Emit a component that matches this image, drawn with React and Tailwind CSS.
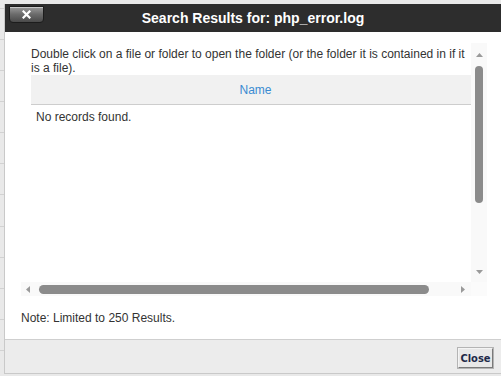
import React from 'react';

const Arrow = ({ dir }) => {
    // little grey triangles used on the scrollbars
    const pts = {
        up: '0,4 3.5,0 7,4',
        down: '0,0 7,0 3.5,4',
        left: '4,0 4,7 0,3.5',
        right: '0,0 0,7 4,3.5',
    }[dir];
    const vert = dir === 'up' || dir === 'down';
    return (
        <svg width={vert ? 7 : 4} height={vert ? 4 : 7} className="block">
            <polygon points={pts} fill="#9a9a9a" />
        </svg>
    );
};

const SearchResults = () => {
    const bgLines = [8, 39, 70, 101, 132, 163, 194, 226, 257, 288, 319, 350];

    return (
        <div className="relative w-[501px] h-[376px] overflow-hidden bg-[#e9e9e9] font-['Liberation_Sans',Arial,sans-serif]">
            {/* page behind the dialog */}
            {bgLines.map((y) => (
                <div key={y} className="absolute left-0 w-[4px] h-px bg-[#d2d2d2]" style={{ top: y }} />
            ))}

            {/* dialog */}
            <div className="absolute left-[4px] top-[4px] w-[497px] h-[370px] flex flex-col bg-white border-l border-b border-[#c9c9c9]">
                {/* title bar */}
                <div className="relative h-[28px] shrink-0 bg-[#2d2d2d] flex items-center justify-center">
                    <button className="absolute left-[4px] top-[2px] w-[35px] h-[17px] rounded-b-[4px] border border-[#1c1c1c] bg-gradient-to-b from-[#9a9a9a] via-[#6a6a6a] to-[#4a4a4a] flex items-center justify-center shadow-[inset_0_1px_0_#c8c8c8]">
                        <svg width="9" height="9" viewBox="0 0 9 9">
                            <path d="M1.5 1.5 L7.5 7.5 M7.5 1.5 L1.5 7.5" stroke="#fff" strokeWidth="2.2" strokeLinecap="square" />
                        </svg>
                    </button>
                    <h1 className="text-white font-bold text-[14px] leading-none">Search Results for: php_error.log</h1>
                </div>

                {/* body */}
                <div className="flex-1 flex flex-col pl-[16px] pt-[11px]">
                    <div className="w-[466px] h-[253px] flex flex-col">
                        <div className="flex h-[239px]">
                            <div className="w-[450px] overflow-hidden pl-[10px] pt-[4px]">
                                <p className="text-[12px] leading-[14px] text-[#333] w-[436px]">
                                    Double click on a file or folder to open the folder (or the folder it is contained in if it is a file).
                                </p>
                                <div className="h-[30px] bg-[#f1f1f1] border-b border-[#cdcdcd] flex items-center justify-center pl-[9px]">
                                    <span className="text-[12px] text-[#3a8bd1]">Name</span>
                                </div>
                                <p className="text-[12px] leading-[14px] text-[#333] pl-[5px] pt-[5px]">No records found.</p>
                            </div>
                            {/* vertical scrollbar */}
                            <div className="w-[16px] bg-[#f9f9f9] flex flex-col items-center">
                                <div className="pt-[10px] pb-[9px]"><Arrow dir="up" /></div>
                                <div className="w-[8px] h-[137px] rounded-full bg-[#8b8b8b]" />
                                <div className="flex-1" />
                                <div className="pb-[8px]"><Arrow dir="down" /></div>
                            </div>
                        </div>
                        {/* horizontal scrollbar */}
                        <div className="flex h-[14px]">
                            <div className="w-[450px] bg-[#f9f9f9] flex items-center">
                                <div className="pl-[5px] pr-[9px]"><Arrow dir="left" /></div>
                                <div className="w-[390px] h-[9px] rounded-full bg-[#8b8b8b]" />
                                <div className="flex-1" />
                                <div className="pr-[6px]"><Arrow dir="right" /></div>
                            </div>
                            <div className="w-[16px] bg-[#fbfbfb]" />
                        </div>
                    </div>
                    <p className="text-[12px] leading-[14px] text-[#333] mt-[15px]">Note: Limited to 250 Results.</p>
                </div>

                {/* footer */}
                <div className="h-[34px] shrink-0 bg-[#ececec] border-t border-[#cfcfcf] flex items-start justify-end pr-[8px] pt-[8px]">
                    <button className="h-[20px] w-[35px] px-0 bg-[#e8e8e8] border border-t-[#f4f4f4] border-l-[#f4f4f4] border-r-[#7a7a7a] border-b-[#7a7a7a] shadow-[0_0_0_1px_#b4b4b4] font-['DejaVu_Sans_Condensed','DejaVu_Sans',Verdana,sans-serif] font-bold text-[11px] leading-none text-[#1e2a48] text-center">
                        Close
                    </button>
                </div>
            </div>
        </div>
    );
};

export default function App() {
    return <SearchResults />;
}
